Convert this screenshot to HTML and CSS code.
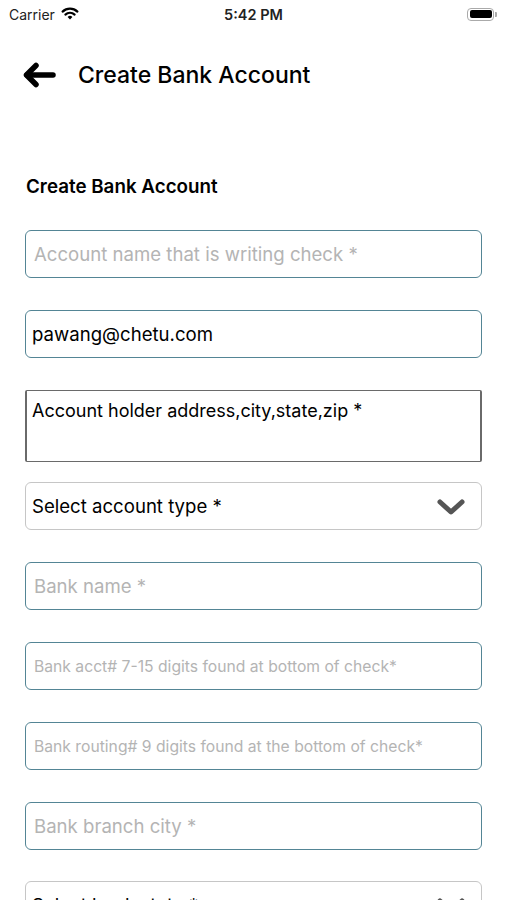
FILE: index.html
```html
<!DOCTYPE html>
<html>
<head>
<meta charset="utf-8">
<link rel="stylesheet" href="styles.css">
</head>
<body>
<div class="status">
  <div class="carrier">Carrier
    <svg class="wifi" width="18" height="14" viewBox="0 0 18 14"><path d="M9 13.5 L6.6 10.9 A3.4 3.4 0 0 1 11.4 10.9 Z" fill="#000"/><path d="M4.4 8.6 A6.6 6.6 0 0 1 13.6 8.6" stroke="#000" stroke-width="2.2" fill="none" stroke-linecap="round"/><path d="M1.6 5.6 A10.6 10.6 0 0 1 16.4 5.6" stroke="#000" stroke-width="2.2" fill="none" stroke-linecap="round"/></svg>
  </div>
  <div class="time">5:42 PM</div>
  <div class="battery"><div class="cell"><div class="fill"></div></div><div class="nub"></div></div>
</div>
<div class="nav">
  <svg class="back" width="34" height="26" viewBox="0 0 34 26"><path d="M5 13 H31" stroke="#000" stroke-width="5.5" stroke-linecap="round"/><path d="M14 3.5 L4.5 13 L14 22.5" stroke="#000" stroke-width="5.5" fill="none" stroke-linecap="round" stroke-linejoin="round"/></svg>
  <div class="title">Create Bank Account</div>
</div>
<div class="content">
  <div class="subhead">Create Bank Account</div>
  <div class="form">
    <div class="field teal"><span class="ph">Account name that is writing check *</span></div>
    <div class="field teal"><span class="val">pawang@chetu.com</span></div>
    <div class="area"><span class="val">Account holder address,city,state,zip *</span></div>
    <div class="field select"><span class="val">Select account type *</span>
      <svg class="chev" width="30" height="18" viewBox="0 0 30 18"><path d="M4 4 L15 14 L26 4" stroke="#555" stroke-width="5" fill="none" stroke-linecap="round" stroke-linejoin="round"/></svg>
    </div>
    <div class="field teal"><span class="ph">Bank name *</span></div>
    <div class="field teal"><span class="ph small">Bank acct# 7-15 digits found at bottom of check*</span></div>
    <div class="field teal"><span class="ph small">Bank routing# 9 digits found at the bottom of check*</span></div>
    <div class="field teal"><span class="ph">Bank branch city *</span></div>
    <div class="field select last"><span class="val">Select bank state *</span>
      <svg class="chev" width="30" height="18" viewBox="0 0 30 18"><path d="M4 4 L15 14 L26 4" stroke="#555" stroke-width="5" fill="none" stroke-linecap="round" stroke-linejoin="round"/></svg>
    </div>
  </div>
</div>
</body>
</html>
```
FILE: styles.css
```css
* { box-sizing: border-box; }
html, body { margin: 0; padding: 0; background: #fff; }
body {
  font-family: Inter, "Liberation Sans", Arial, sans-serif;
  color: #000;
  width: 507px;
  height: 900px;
  overflow: hidden;
}
.status {
  height: 28px;
  display: flex;
  align-items: center;
  justify-content: space-between;
  padding: 0 9px 0 9px;
  position: relative;
}
.carrier {
  display: flex;
  align-items: center;
  gap: 6px;
  font-size: 14px;
  color: #222;
}
.wifi { margin-top: -3px; }
.time {
  position: absolute;
  left: 0;
  right: 0;
  text-align: center;
  font-size: 14.5px;
  font-weight: 600;
  color: #222;
  pointer-events: none;
}
.battery { display: flex; align-items: center; margin-right: 1px; }
.cell {
  width: 27px;
  height: 13px;
  border: 1.5px solid #aaa;
  border-radius: 4px;
  padding: 1.5px;
}
.fill { width: 100%; height: 100%; background: #000; border-radius: 2px; }
.nub { width: 2px; height: 5px; background: #aaa; border-radius: 0 1px 1px 0; margin-left: 1px; }
.nav {
  height: 94px;
  display: flex;
  align-items: center;
  padding-left: 22px;
}
.title {
  margin-left: 22px;
  font-size: 23px;
  font-weight: 500;
}
.content { padding: 0 25px; }
.subhead {
  margin-top: 54px;
  height: 22px;
  line-height: 22px;
  font-size: 18.8px;
  font-weight: 600;
  padding-left: 1px;
}
.form {
  margin-top: 32px;
  display: flex;
  flex-direction: column;
  gap: 32px;
}
.field {
  height: 48px;
  border-radius: 6px;
  display: flex;
  align-items: center;
  justify-content: space-between;
  font-size: 18.6px;
}
.teal { border: 1.5px solid #548595; padding-left: 8px; }
.teal .val { margin-left: -2px; }
.ph { color: #b4b4b4; }
.ph.small { font-size: 15.7px; }
.area {
  height: 72px;
  border: 1.5px solid #6a6a6a;
  border-left-width: 2px;
  border-right-width: 2px;
  border-radius: 2px;
  padding: 9px 5px;
  font-size: 18px;
  margin-bottom: -12px;
}
.select {
  border: 1.5px solid #c6c6c6;
  padding: 0 15px 0 6px;
}
.select.last { margin-top: -1px; }
.chev { margin-top: 2px; }
```
